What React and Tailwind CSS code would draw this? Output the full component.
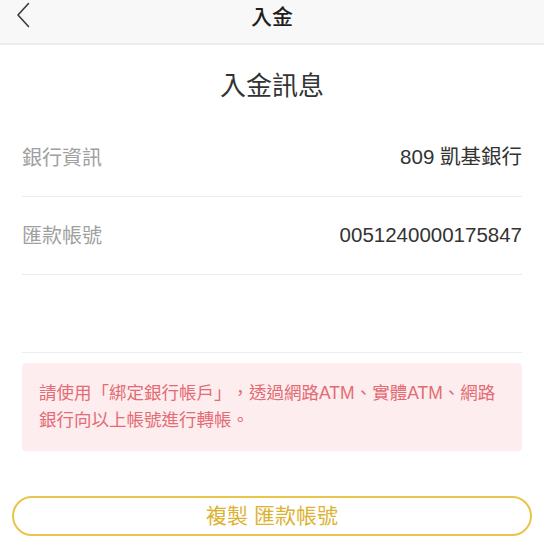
import React from "react";

const FONT = {
  fontFamily: '"Liberation Sans", "Noto Sans CJK TC", sans-serif',
};

const rows = [
  { label: "銀行資訊", value: "809 凱基銀行" },
  { label: "匯款帳號", value: "0051240000175847" },
  { label: "", value: "" },
];

const App = () => {
  return (
    <div className="w-[544px] h-[554px] bg-white overflow-hidden" style={FONT}>
      {/* header */}
      <header className="h-[45px] bg-[#f8f8f8] border-b-2 border-[#ececec]">
        <div className="relative h-[34px] flex items-center justify-center">
          <button className="absolute left-[15px] top-[2px] w-[16px] h-[26px] flex items-center justify-center">
            <svg width="14" height="26" viewBox="0 0 14 26" fill="none">
              <path
                d="M12.5 1.5 L2 13 L12.5 24.5"
                stroke="#3a3a3a"
                strokeWidth="1.6"
                strokeLinecap="round"
                strokeLinejoin="round"
              />
            </svg>
          </button>
          <h1 className="text-[21px] font-medium text-[#1f1f1f]">入金</h1>
        </div>
      </header>

      {/* title */}
      <div className="h-[74px] pt-[8px] flex items-center justify-center">
        <h2 className="text-[26px] text-[#333]">入金訊息</h2>
      </div>

      {/* info rows */}
      <ul className="mx-[22px]">
        {rows.map((row, i) => (
          <li
            key={i}
            className="h-[78px] flex items-center justify-between border-b border-[#ececec]"
          >
            <span className="text-[20px] text-[#a0a0a0]">{row.label}</span>
            <span className="text-[20.5px] text-[#333]">{row.value}</span>
          </li>
        ))}
      </ul>

      {/* notice */}
      <div className="mx-[22px] mt-[10px] h-[88px] rounded-[4px] bg-[#fdedef] px-[17px] flex items-center">
        <p className="text-[17.5px] leading-[27px] text-[#e36b73] [text-spacing-trim:space-all]">
          請使用「綁定銀行帳戶」，透過網路ATM、實體ATM、網路
          <br />
          銀行向以上帳號進行轉帳。
        </p>
      </div>

      {/* copy button */}
      <div className="px-[12px] mt-[45px]">
        <button className="w-full h-[40px] rounded-full border-2 border-[#e8c44a] text-[21px] text-[#dcb232] flex items-center justify-center">
          複製 匯款帳號
        </button>
      </div>
    </div>
  );
};

export default App;
